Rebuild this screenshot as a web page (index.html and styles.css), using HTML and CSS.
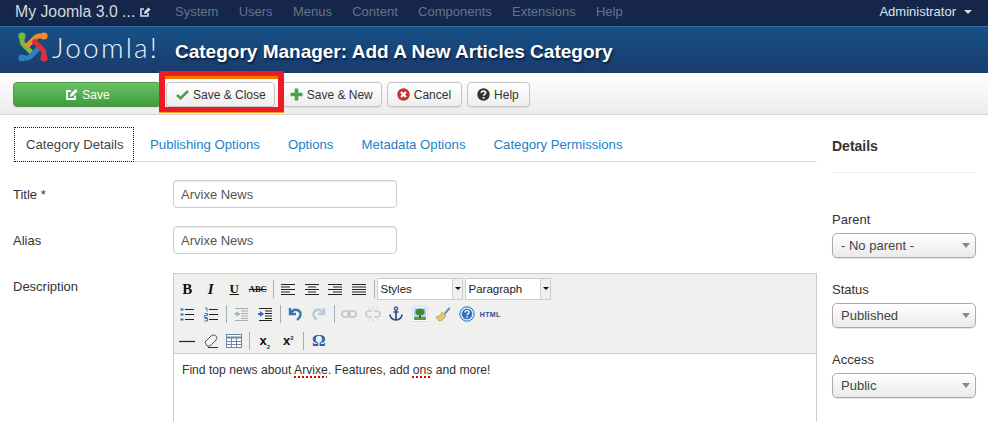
FILE: index.html
```html
<!DOCTYPE html>
<html lang="en">
<head>
<meta charset="utf-8">
<title>Category Manager: Add A New Articles Category</title>
<link rel="stylesheet" href="styles.css">
</head>
<body>
<nav class="topbar">
  <a class="brand">My Joomla 3.0 ...
    <svg class="brand-icon" viewBox="0 0 12 12"><path d="M9 7v3H2V3h3" fill="none" stroke="#d6dbe2" stroke-width="1.6"/><path d="M5 8l.5-2.5L9.5 1.5l2 2-4 4z" fill="#d6dbe2"/></svg>
  </a>
  <ul class="menu">
    <li>System</li><li>Users</li><li>Menus</li><li>Content</li><li>Components</li><li>Extensions</li><li>Help</li>
  </ul>
  <div class="user">Administrator<span class="caret"></span></div>
</nav>
<header class="head">
  <div class="logo">
    <svg class="logo-mark" viewBox="0 0 30 30">
      <g fill="none" stroke-width="5">
        <path d="M4 4v5q0 2 2 4l9 9" stroke="#7ab642"/>
        <path d="M4 26h5q2 0 4-2l9-9" stroke="#2f7fc1"/>
        <path d="M26 4h-5q-2 0-4 2l-9 9" stroke="#f38b2c"/>
        <path d="M26 26v-5q0-2-2-4l-9-9" stroke="#d8323c"/>
      </g>
      <circle cx="4" cy="4" r="3.6" fill="#7ab642"/><circle cx="26" cy="4" r="3.6" fill="#f38b2c"/>
      <circle cx="26" cy="26" r="3.6" fill="#d8323c"/><circle cx="4" cy="26" r="3.6" fill="#2f7fc1"/>
    </svg>
    <span class="logo-text">Joomla!</span>
  </div>
  <h1 class="page-title">Category Manager: Add A New Articles Category</h1>
</header>
<div class="toolbar">
  <button class="btn btn-save">
    <svg class="ic" viewBox="0 0 13 13"><path d="M10 7.5V11H2V3h4" fill="none" stroke="#fff" stroke-width="1.8"/><path d="M5 9l.6-3L10.5 1l2 2-5 5z" fill="#fff"/></svg>Save
  </button>
  <div class="highlighted">
    <button class="btn">
      <svg class="ic" viewBox="0 0 13 13"><path d="M1 7l3.600 3.200L12 3" fill="none" stroke="#4a9e4f" stroke-width="2.600"/></svg>Save &amp; Close
    </button>
    <span class="red-box"></span>
  </div>
  <button class="btn">
    <svg class="ic" viewBox="0 0 13 13"><path d="M6.5 0.5v12M0.5 6.5h12" stroke="#4aa54a" stroke-width="3.6"/></svg>Save &amp; New
  </button>
  <button class="btn btn-roomy">
    <svg class="ic" viewBox="0 0 13 13"><circle cx="6.5" cy="6.5" r="6.2" fill="#c9302c"/><path d="M4 4l5 5M9 4l-5 5" stroke="#fff" stroke-width="2.2"/></svg>Cancel
  </button>
  <button class="btn btn-roomy">
    <svg class="ic" viewBox="0 0 13 13"><circle cx="6.5" cy="6.5" r="6.2" fill="#333"/><path d="M4.4 5q0-2 2.1-2t2.1 1.8q0 1-1.1 1.6-.9.5-.9 1.4" fill="none" stroke="#fff" stroke-width="1.6"/><rect x="5.7" y="9" width="1.7" height="1.7" fill="#fff"/></svg>Help
  </button>
</div>
<div class="layout">
  <main class="main">
    <div class="tabs">
      <span class="tab active">Category Details</span>
      <span class="tab">Publishing Options</span>
      <span class="tab">Options</span>
      <span class="tab">Metadata Options</span>
      <span class="tab">Category Permissions</span>
    </div>
    <div class="field"><label class="label">Title *</label><div class="input">Arvixe News</div></div>
    <div class="field"><label class="label">Alias</label><div class="input">Arvixe News</div></div>
    <div class="field field-desc">
      <label class="label">Description</label>
      <div class="editor">
        <div class="ed-tools">
          <div class="ed-row">
            <span class="eb"><b class="t-b">B</b></span>
            <span class="eb"><i class="t-i">I</i></span>
            <span class="eb"><u class="t-u">U</u></span>
            <span class="eb"><s class="t-s">ABC</s></span>
            <span class="sep"></span>
            <span class="eb"><svg class="ei" viewBox="0 0 16 16"><path d="M1 3.5h14M1 6h9M1 8.5h14M1 11h9M1 13.500h14" stroke="#222"/></svg></span>
            <span class="eb"><svg class="ei" viewBox="0 0 16 16"><path d="M1 3.500h14M4 6h8M1 8.500h14M4 11h8M1 13.500h14" stroke="#222"/></svg></span>
            <span class="eb"><svg class="ei" viewBox="0 0 16 16"><path d="M1 3.500h14M6 6h9M1 8.500h14M6 11h9M1 13.500h14" stroke="#222"/></svg></span>
            <span class="eb"><svg class="ei" viewBox="0 0 16 16"><path d="M1 3.500h14M1 6h14M1 8.500h14M1 11h14M1 13.500h14" stroke="#222"/></svg></span>
            <span class="sep"></span>
            <span class="ed-select ed-styles">Styles<span class="ed-arrow"></span></span>
            <span class="ed-select ed-para">Paragraph<span class="ed-arrow"></span></span>
          </div>
          <div class="ed-row ed-row-2">
            <span class="eb"><svg class="ei" viewBox="0 0 16 16"><path d="M6 3.500h9M6 8.500h9M6 13.500h9" stroke="#222"/><path d="M1.500 2.500h3v2h-3zM1.500 7.500h3v2h-3zM1.500 12.500h3v2h-3z" fill="#3a6ec2"/></svg></span>
            <span class="eb"><svg class="ei" viewBox="0 0 16 16"><path d="M6 3.500h9M6 8.500h9M6 13.500h9" stroke="#222"/><path d="M2 2h2v3.500M1.500 7.500h3v2h-3v2h3M1.500 12.500h3v2.500h-3" fill="none" stroke="#3a6ec2"/></svg></span>
            <span class="sep"></span>
            <span class="eb"><svg class="ei" viewBox="0 0 16 16"><path d="M2 2.500h13M8 5h7M8 7.500h7M8 10h7M8 12.500h7M2 14.500h13" stroke="#aaa"/><path d="M1 8l4-3v2h2v2H5v2z" fill="#9db8dc"/></svg></span>
            <span class="eb"><svg class="ei" viewBox="0 0 16 16"><path d="M2 2.500h13M8 5h7M8 7.500h7M8 10h7M8 12.500h7M2 14.500h13" stroke="#222"/><path d="M7 8L3 5v2H1v2h2v2z" fill="#2f6ec2"/></svg></span>
            <span class="sep"></span>
            <span class="eb"><svg class="ei" viewBox="0 0 16 16"><path d="M3 2v6h6M3 8q3-5 7-4 4 1 3.500 5-.5 3-3.500 5" fill="none" stroke="#3b72b8" stroke-width="2.400"/></svg></span>
            <span class="eb"><svg class="ei" viewBox="0 0 16 16"><path d="M13 2v6H7M13 8q-3-5-7-4-4 1-3.500 5 .5 3 3.500 5" fill="none" stroke="#b9c9dc" stroke-width="2.400"/></svg></span>
            <span class="sep"></span>
            <span class="eb"><svg class="ei" viewBox="0 0 16 16"><rect x="1" y="5" width="8" height="6" rx="3" fill="none" stroke="#bcc4cc" stroke-width="1.600"/><rect x="7" y="5" width="8" height="6" rx="3" fill="none" stroke="#bcc4cc" stroke-width="1.600"/></svg></span>
            <span class="eb"><svg class="ei" viewBox="0 0 16 16"><path d="M7 5H4a3 3 0 0 0 0 6h3M9 5h3a3 3 0 0 1 0 6H9" fill="none" stroke="#c6ccd2" stroke-width="1.600"/><path d="M8 0v3M8 13v3M3 1l2 2.500M13 1l-2 2.500M3 15l2-2.500M13 15l-2-2.500" stroke="#d6dade"/></svg></span>
            <span class="eb"><svg class="ei" viewBox="0 0 16 16"><circle cx="8" cy="2.500" r="1.600" fill="none" stroke="#2f4f7f" stroke-width="1.200"/><path d="M8 4v10M5.500 6h5M2 8.500q.5 5 6 5.500 5.500-.5 6-5.500" fill="none" stroke="#2f4f7f" stroke-width="1.700"/></svg></span>
            <span class="eb"><svg class="ei" viewBox="0 0 16 16"><rect x="0.500" y="0.500" width="15" height="15" fill="#fff" stroke="#ddd"/><rect x="2" y="2" width="12" height="12" fill="#a8d0ee"/><rect x="2" y="11" width="12" height="3" fill="#5f9e3a"/><rect x="7" y="8" width="2" height="4" fill="#7a4a22"/><ellipse cx="8" cy="6" rx="4.500" ry="3.200" fill="#3f8a2d"/></svg></span>
            <span class="eb"><svg class="ei" viewBox="0 0 16 16"><path d="M9 7l5-6 1.500 1.500L10 9z" fill="#6f8fb0"/><path d="M1 11q4 0 6-5l4 4q-3 5-7 5z" fill="#e3c86a" stroke="#a98d3a" stroke-width=".6"/></svg></span>
            <span class="eb"><svg class="ei" viewBox="0 0 16 16"><circle cx="8" cy="8" r="7.200" fill="#dbe8f8" stroke="#2e6fc4"/><circle cx="8" cy="8" r="5.200" fill="#2e6fc4"/><path d="M6 6.500q0-1.800 2-1.800t2 1.600q0 1-1 1.500-.9.500-.9 1.400" fill="none" stroke="#fff" stroke-width="1.300"/><rect x="7.300" y="10.300" width="1.500" height="1.400" fill="#fff"/></svg></span>
            <span class="eb"><span class="t-html">HTML</span></span>
          </div>
          <div class="ed-row ed-row-3">
            <span class="eb"><svg class="ei" viewBox="0 0 16 16"><path d="M0 8.500h16" stroke="#222" stroke-width="1.200"/></svg></span>
            <span class="eb"><svg class="ei" viewBox="0 0 16 16"><path d="M2 9l6-6q1-1 2.500-1t3 1.500q1 2-.5 3.500l-6 6H4z" fill="#f4f4f4" stroke="#555"/><path d="M5 14.500h10" stroke="#333"/></svg></span>
            <span class="eb"><svg class="ei" viewBox="0 0 16 16"><rect x="0.500" y="1.500" width="15" height="13" fill="#fff" stroke="#6b87ab"/><path d="M1 4.500h14" stroke="#6b87ab" stroke-width="2"/><path d="M5.500 5v9M10.500 5v9M1 8.500h14M1 11.500h14" stroke="#6b87ab"/></svg></span>
            <span class="sep"></span>
            <span class="eb"><span class="t-x">x<sub class="t-sub">2</sub></span></span>
            <span class="eb"><span class="t-x">x<sup class="t-sub">2</sup></span></span>
            <span class="sep"></span>
            <span class="eb"><span class="t-omega">Ω</span></span>
          </div>
        </div>
        <div class="ed-body">Find top news about <span class="spell">Arvixe</span>. Features, add <span class="spell">ons</span> and more!</div>
      </div>
    </div>
  </main>
  <aside class="side">
    <h2 class="side-title">Details</h2>
    <div class="side-field side-first"><label class="side-label">Parent</label><div class="select">- No parent -</div></div>
    <div class="side-field"><label class="side-label">Status</label><div class="select">Published</div></div>
    <div class="side-field"><label class="side-label">Access</label><div class="select">Public</div></div>
  </aside>
</div>
</body>
</html>
```
FILE: styles.css
```css
* { box-sizing: border-box; }
html, body { margin: 0; height: 100%; overflow: hidden; }
body { font: 13px/18px "Liberation Sans", Arial, sans-serif; color: #333; background: #fff; }

.topbar { height: 27px; display: flex; align-items: center; padding: 0 15px 3px; background: linear-gradient(#17264a, #11284c); border-bottom: 1px solid #3f6d9c; }
.brand { font-size: 15.800px; color: #d5d9df; display: flex; align-items: center; width: 150px; flex: none; }
.brand-icon { width: 12px; height: 12px; margin-left: 4px; }
.menu { display: flex; gap: 20.300px; list-style: none; margin: 0; padding: 0 0 0 10px; color: #64748b; }
.user { margin-left: auto; padding-right: 1px; color: #dfe3e8; display: flex; align-items: center; }
.caret { width: 0; height: 0; margin-left: 8px; border: 4px solid transparent; border-top-color: #ddd; border-bottom: 0; }

.head { height: 46px; display: flex; align-items: center; background: linear-gradient(#165187, #1a3a6c); padding-left: 18px; }
.logo { width: 157px; flex: none; display: flex; align-items: center; margin-bottom: 6px; }
.logo-mark { width: 30px; height: 30px; flex: none; }
.logo-text { font: 300 28px/30px Lato, sans-serif; letter-spacing: 2.200px; color: #eef2f6; margin-left: 4px; }
.page-title { margin: 4px 0 0; font: bold 19px/24px "Liberation Sans", Arial, sans-serif; color: #fff; text-shadow: 1px 2px 2px #0a1c3c; }

.toolbar { height: 42px; display: flex; align-items: center; gap: 5px; padding: 2px 0 0 13px; background: linear-gradient(#fff, #ececec); border-bottom: 1px solid #d5d5d5; }
.btn { height: 25px; padding: 0 8px 0 9px; display: flex; align-items: center; font: 12px "Liberation Sans", Arial, sans-serif; color: #333; background: linear-gradient(#fff, #eee); border: 1px solid #c4c4c4; border-radius: 4px; box-shadow: 0 1px 1px rgba(0,0,0,.08); }
.btn-roomy { padding-right: 10px; }
.ic { width: 13px; height: 13px; margin-right: 4px; flex: none; }
.btn-save { width: 148px; justify-content: center; color: #fff; background: linear-gradient(#6cc366, #3f9a3e); border-color: #4c9a48; }
.highlighted { position: relative; display: flex; }
.red-box { position: absolute; left: -7px; right: -9px; top: -11px; bottom: -5px; border: solid #ed1c24; border-width: 5px 6px; box-shadow: inset 0 3px 0 #f07a00, 0 1px 0 #f59a23; pointer-events: none; }

.layout { display: flex; padding: 12px 12px 0 13px; }
.main { width: 804px; flex: none; }
.tabs { display: flex; height: 35px; padding-left: 1px; border-bottom: 1px solid #ddd; font-size: 13.200px; }
.tab { height: 35px; padding: 9px 14px 0; color: #1a7fc9; white-space: nowrap; }
.tab.active { width: 120px; padding: 8px 0 0 11px; margin-right: 2px; color: #444; background: #fff; border: 1px dotted #111; }
.field { display: flex; align-items: flex-start; margin-top: 18px; }
.label { width: 160px; flex: none; padding-top: 6px; }
.input { width: 224px; height: 28px; padding: 5px 7px 0; color: #555; border: 1px solid #ccc; border-radius: 4px; box-shadow: inset 0 1px 1px rgba(0,0,0,.08); }
.editor { width: 644px; height: 160px; margin-top: 1px; border: 1px solid #ccc; border-width: 1px 1px 0 1px; flex: none; }
.ed-tools { height: 80px; padding: 2px 0 0 1.500px; background: #f0f0ee; border-bottom: 1px solid #ccc; }
.ed-row { display: flex; align-items: center; height: 26px; }
.ed-row-2 { margin-top: -1px; }
.ed-row-3 { margin-top: 1px; }
.eb { width: 23.500px; height: 20px; flex: none; display: flex; align-items: center; justify-content: center; color: #111; }
.ei { width: 16px; height: 16px; }
.sep { width: 7px; height: 20px; flex: none; background: linear-gradient(#a4acb4, #a4acb4) center / 1px 18px no-repeat; }
.t-b { font: bold 15px "Liberation Serif", serif; }
.t-i { font: italic bold 15px "Liberation Serif", serif; }
.t-u { font: bold 13px "Liberation Serif", serif; }
.t-s { font: bold 8.500px "Liberation Serif", serif; }
.t-html { font: bold 7px "Liberation Sans", sans-serif; letter-spacing: .4px; color: #2f4d96; }
.t-x { font: bold 13px/14px "Liberation Sans", sans-serif; }
.t-sub { font-size: 6px; line-height: 0; color: #234; }
.t-omega { font: bold 17px/18px "Liberation Serif", serif; color: #2f5cae; }
.ed-select { height: 22px; flex: none; display: flex; align-items: center; position: relative; padding-left: 3px; font-size: 11.500px; background: #fff; border: 1px solid #ccc; color: #222; margin-bottom: 1px; }
.ed-styles { width: 86px; margin-left: -1px; }
.ed-para { width: 86px; margin-left: 2px; }
.ed-arrow { position: absolute; top: 0; right: 0; bottom: 0; width: 10px; background: #f0f0ee; border-left: 1px solid #ccc; }
.ed-arrow::after { content: ""; position: absolute; left: 2px; top: 8px; border: 3px solid transparent; border-top-color: #111; border-bottom: 0; }
.ed-body { padding: 7px 8px; font-size: 12.150px; line-height: 18px; color: #333; background: #fff; height: 80px; }
.spell { text-decoration: underline dotted #e00000 2px; text-underline-offset: 2px; }

.side { width: 144px; margin-left: 15px; flex: none; }
.side-title { margin: 0; height: 46px; padding-top: 10px; font: bold 14px/18px "Liberation Sans", Arial, sans-serif; color: #333; border-bottom: 1px solid #eee; }
.side-field { margin-top: 23px; display: flex; flex-direction: column; }
.side-first { margin-top: 38px; }
.side-label { height: 17px; line-height: 17px; margin-bottom: 5px; }
.select { position: relative; height: 25px; padding: 3px 8px; line-height: 18px; color: #444; background: linear-gradient(#fff, #eaeaea); border: 1px solid #aaa; border-radius: 5px; box-shadow: 0 1px 1px rgba(0,0,0,.1); }
.select::after { content: ""; position: absolute; right: 5px; top: 9px; border: 4px solid transparent; border-top: 5px solid #888; border-bottom: 0; }
```
